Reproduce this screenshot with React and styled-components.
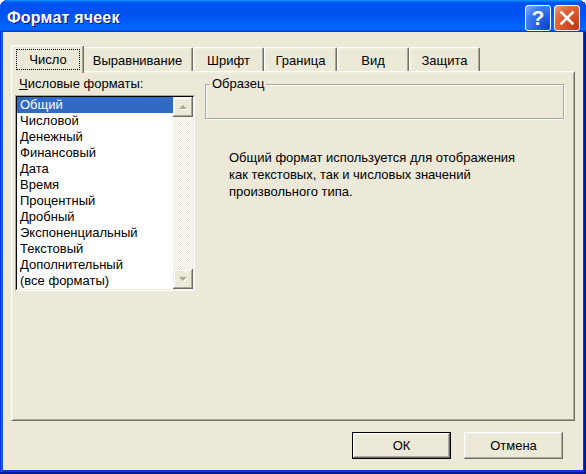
import React from 'react';
import styled, { createGlobalStyle } from 'styled-components';

const GlobalStyle = createGlobalStyle`
  html, body {
    margin: 0;
    padding: 0;
    background: #fff;
  }
  body {
    font-family: 'Liberation Sans', Arial, sans-serif;
    font-size: 13px;
    color: #000;
  }
`;

const Window = styled.div`
  width: 586px;
  height: 474px;
  box-sizing: border-box;
  display: flex;
  flex-direction: column;
  background: #ece9d8;
  border-radius: 8px 8px 0 0;
  overflow: hidden;
  padding: 0 3px 4px;
  box-shadow: inset -1px -1px #00138c, inset 1px 1px #0831d9,
    inset -2px -2px #001ea0, inset 2px 2px #166aee,
    inset -3px -3px #003bda, inset 3px 3px #0855dd,
    inset 0 -4px #003bda;
`;

const TitleBar = styled.div`
  height: 32px;
  margin: 0 -3px;
  flex-shrink: 0;
  display: flex;
  align-items: center;
  justify-content: space-between;
  padding: 4px 6px 0 7px;
  box-sizing: border-box;
  background: linear-gradient(180deg, #0997ff, #0053ee 8%, #0050ee 40%, #06f 88%, #06f 93%, #005bff 95%, #003dd7 96%, #003dd7);
`;

const TitleText = styled.span`
  color: #fff;
  font-weight: bold;
  font-size: 16px;
  letter-spacing: 0.2px;
  text-shadow: 1px 1px #0f1089;
`;

const TitleButtons = styled.div`
  display: flex;
  gap: 3px;
`;

const TitleButton = styled.div`
  width: 26px;
  height: 26px;
  box-sizing: border-box;
  border: 1px solid #fff;
  border-radius: 3px;
  display: flex;
  align-items: center;
  justify-content: center;
  color: #fff;
  font-weight: bold;
  font-size: 21px;
  background: ${p => (p.$close
    ? 'radial-gradient(circle at 90% 90%, #c43a10 0%, #d9542a 45%, #e2683f 70%, #f2a487 100%)'
    : 'radial-gradient(circle at 90% 90%, #0b44d8 0%, #2766ec 45%, #3d7cf2 70%, #8db2fb 100%)')};
`;

const Client = styled.div`
  flex: 1;
  display: flex;
  flex-direction: column;
  padding-top: 13px;
`;

const TabRow = styled.div`
  height: 26px;
  display: flex;
  align-items: flex-end;
  margin-left: 8px;
  padding-left: 2px;
`;

const Tab = styled.div`
  box-sizing: border-box;
  width: ${p => p.$w}px;
  height: ${p => (p.$active ? 28 : 24)}px;
  margin: 0 ${p => (p.$active ? -2 : 0)}px ${p => (p.$active ? -2 : 0)}px;
  position: relative;
  z-index: ${p => (p.$active ? 2 : 1)};
  background: #ece9d8;
  border-top: 1px solid #fff;
  border-left: 1px solid #fff;
  border-right: 1px solid #716f64;
  border-radius: 2px 2px 0 0;
  box-shadow: inset -1px 0 #aca899, inset 1px 1px #f1efe2;
  display: flex;
  justify-content: center;
  padding-top: ${p => (p.$active ? 3 : 5)}px;
  line-height: 16px;
`;

const FocusRing = styled.div`
  flex: 1;
  height: 21px;
  box-sizing: border-box;
  margin: 0 3px 0 4px;
  border: 1px dotted #000;
  display: flex;
  align-items: center;
  justify-content: center;
`;

const Panel = styled.div`
  margin: 0 8px;
  height: 350px;
  box-sizing: border-box;
  border: 1px solid;
  border-color: #fff #716f64 #716f64 #fff;
  box-shadow: inset 1px 1px #f1efe2, inset -1px -1px #aca899;
  padding: 4px 10px 0 3px;
  display: flex;
  gap: 10px;
`;

const LeftColumn = styled.div`
  display: flex;
  flex-direction: column;
  gap: 3px;
`;

const FieldLabel = styled.div`
  line-height: 16px;
  margin-left: 4px;
`;

const ListFrame = styled.div`
  width: 180px;
  height: 196px;
  box-sizing: border-box;
  border: 1px solid;
  border-color: #aca899 #fff #fff #aca899;
`;

const ListInner = styled.div`
  height: 100%;
  box-sizing: border-box;
  border: 1px solid;
  border-color: #000 #f1efe2 #f1efe2 #000;
  background: #fff;
  display: flex;
`;

const Items = styled.div`
  flex: 1;
`;

const Item = styled.div`
  height: 16px;
  line-height: 16px;
  padding: 0 3px;
  white-space: nowrap;
  background: ${p => (p.$selected ? '#316ac5' : 'transparent')};
  color: ${p => (p.$selected ? '#fff' : '#000')};
`;

const ScrollBar = styled.div`
  width: 20px;
  display: flex;
  flex-direction: column;
  justify-content: space-between;
  background: repeating-conic-gradient(#fff 0 25%, #ece9d8 0 50%) 0 0 / 2px 2px;
`;

const ScrollButton = styled.div`
  width: 20px;
  height: 20px;
  box-sizing: border-box;
  background: #ece9d8;
  box-shadow: inset -1px -1px #716f64, inset 1px 1px #f1efe2,
    inset -2px -2px #aca899, inset 2px 2px #fff;
  display: flex;
  align-items: center;
  justify-content: center;
`;

const RightColumn = styled.div`
  flex: 1;
  display: flex;
  flex-direction: column;
`;

const GroupBox = styled.fieldset`
  margin: 0;
  padding: 0 4px;
  min-inline-size: 0;
  border: 1px solid #aca899;
  box-shadow: 1px 1px #fff, inset 1px 1px #fff;
`;

const GroupLegend = styled.legend`
  padding: 0 2px;
  line-height: 16px;
  background: #ece9d8;
`;

const GroupBody = styled.div`
  height: 26px;
`;

const Description = styled.p`
  margin: 30px 0 0 24px;
  line-height: 17px;
`;

const ButtonRow = styled.div`
  display: flex;
  justify-content: flex-end;
  gap: 13px;
  margin-top: 11px;
  padding-right: 20px;
`;

const DialogButton = styled.button`
  width: 99px;
  height: 27px;
  border: none;
  padding: 0;
  font: inherit;
  color: #000;
  background: #ece9d8;
  box-shadow: ${p => (p.$default
    ? 'inset 0 0 0 1px #000, inset -2px -2px #716f64, inset 2px 2px #fff, inset -3px -3px #aca899, inset 3px 3px #f1efe2'
    : 'inset -1px -1px #716f64, inset 1px 1px #fff, inset -2px -2px #aca899, inset 2px 2px #f1efe2')};
`;

const tabs = [
  { label: 'Число', w: 69, active: true },
  { label: 'Выравнивание', w: 111 },
  { label: 'Шрифт', w: 71 },
  { label: 'Граница', w: 73 },
  { label: 'Вид', w: 72 },
  { label: 'Защита', w: 71 },
];

const formats = [
  'Общий',
  'Числовой',
  'Денежный',
  'Финансовый',
  'Дата',
  'Время',
  'Процентный',
  'Дробный',
  'Экспоненциальный',
  'Текстовый',
  'Дополнительный',
  '(все форматы)',
];

const Arrow = ({ down }) => (
  <svg width="11" height="7" viewBox="0 0 11 7">
    {down ? (
      <>
        <polygon points="2,2 10,2 6,6" fill="#fff" />
        <polygon points="1,1 9,1 5,5" fill="#aca899" />
      </>
    ) : (
      <>
        <polygon points="6,2 10,6 2,6" fill="#fff" />
        <polygon points="5,1 9,5 1,5" fill="#aca899" />
      </>
    )}
  </svg>
);

export default function App() {
  return (
    <>
      <GlobalStyle />
      <Window>
        <TitleBar>
          <TitleText>Формат ячеек</TitleText>
          <TitleButtons>
            <TitleButton>?</TitleButton>
            <TitleButton $close>
              <svg width="16" height="16" viewBox="0 0 16 16">
                <path d="M2.5 2.5 L13.5 13.5 M13.5 2.5 L2.5 13.5" stroke="#fff" strokeWidth="2.6" strokeLinecap="square" />
              </svg>
            </TitleButton>
          </TitleButtons>
        </TitleBar>
        <Client>
          <TabRow>
            {tabs.map(t => (
              <Tab key={t.label} $w={t.active ? t.w + 4 : t.w} $active={t.active}>
                {t.active ? <FocusRing>{t.label}</FocusRing> : <span>{t.label}</span>}
              </Tab>
            ))}
          </TabRow>
          <Panel>
            <LeftColumn>
              <FieldLabel><u>Ч</u>исловые форматы:</FieldLabel>
              <ListFrame>
                <ListInner>
                  <Items>
                    {formats.map((f, i) => (
                      <Item key={f} $selected={i === 0}>{f}</Item>
                    ))}
                  </Items>
                  <ScrollBar>
                    <ScrollButton><Arrow /></ScrollButton>
                    <ScrollButton><Arrow down /></ScrollButton>
                  </ScrollBar>
                </ListInner>
              </ListFrame>
            </LeftColumn>
            <RightColumn>
              <GroupBox>
                <GroupLegend>Образец</GroupLegend>
                <GroupBody />
              </GroupBox>
              <Description>
                Общий формат используется для отображения<br />
                как текстовых, так и числовых значений<br />
                произвольного типа.
              </Description>
            </RightColumn>
          </Panel>
          <ButtonRow>
            <DialogButton $default>ОК</DialogButton>
            <DialogButton>Отмена</DialogButton>
          </ButtonRow>
        </Client>
      </Window>
    </>
  );
}
